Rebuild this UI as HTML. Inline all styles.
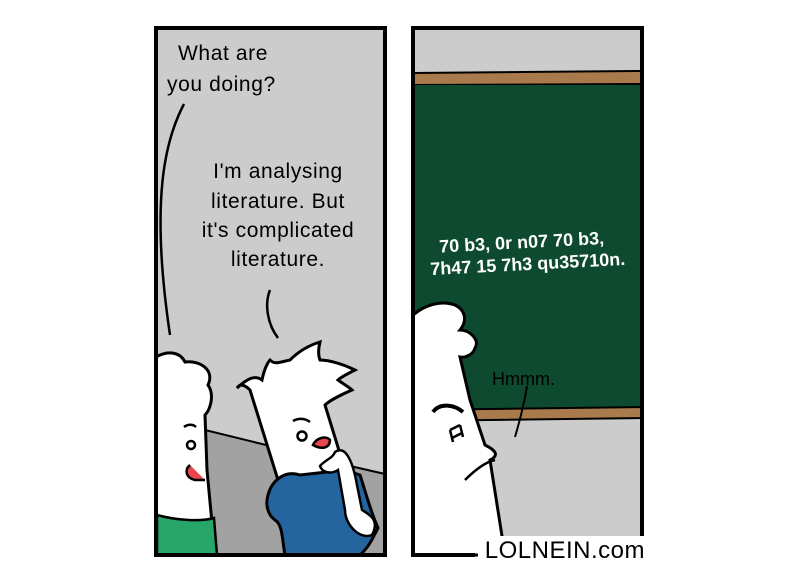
<!DOCTYPE html>
<html><head><meta charset="utf-8"><style>
html,body{margin:0;padding:0;background:#fff;width:798px;height:584px;overflow:hidden}
svg{display:block}
text{font-family:"Liberation Sans",sans-serif}
</style></head><body>
<svg width="798" height="584" viewBox="0 0 798 584" xmlns="http://www.w3.org/2000/svg">
<!-- Panel 1 -->
<rect x="156" y="28" width="229" height="527" fill="#cccccc"/>
<polygon points="205,430 262,444 350,466 385,474 385,555 205,555" fill="#a2a2a2" stroke="#000" stroke-width="2"/>
<g fill="#000" font-size="21" letter-spacing="0.6">
<text x="178" y="60">What are</text>
<text x="167" y="91">you doing?</text>
<text x="278" y="178" text-anchor="middle">I'm analysing</text>
<text x="278" y="208" text-anchor="middle">literature. But</text>
<text x="278" y="237" text-anchor="middle">it's complicated</text>
<text x="278" y="266" text-anchor="middle">literature.</text>
</g>
<path d="M184,104 C165,140 150,200 170,335" fill="none" stroke="#000" stroke-width="2.5"/>
<path d="M270,290 C264,305 268,325 278,338" fill="none" stroke="#000" stroke-width="2.5"/>
<!-- left character -->
<path d="M156,357 C168,350 180,352 185,362 C200,360 215,370 208,385 C215,395 210,410 205,415 L207,470 L215,555 L156,555 Z" fill="#fff" stroke="#000" stroke-width="3"/>
<path d="M157,515 C175,520 200,522 214,518 L217,555 L157,555 Z" fill="#27a66a" stroke="#000" stroke-width="2.5"/>
<circle cx="191" cy="445" r="4" fill="none" stroke="#000" stroke-width="2.5"/>
<path d="M184,427 C188,424 193,424 196,427" fill="none" stroke="#000" stroke-width="2.5"/>
<path d="M190,465 C184,470 186,478 195,480 L205,480" fill="#e9454d" stroke="#000" stroke-width="2.5"/>
<!-- right character -->
<path d="M278,480 L250,390 C245,385 240,383 237,388 C248,378 255,375 262,380 C265,365 270,360 270,360 C275,365 280,362 290,360 C300,350 310,345 320,342 C318,350 318,355 320,360 C330,360 345,365 355,370 C345,375 340,378 338,380 C345,385 350,388 352,390 C345,393 330,400 325,405 L345,470 Z" fill="#fff" stroke="#000" stroke-width="3"/>
<path d="M268,495 C272,480 285,470 300,475 L345,470 L360,475 C365,490 370,510 378,528 C372,540 368,548 360,555 L285,555 C282,540 283,525 275,520 C268,515 265,505 268,495 Z" fill="#2465a0" stroke="#000" stroke-width="3"/>
<path d="M335,452 C345,445 352,460 356,480 L362,510 C370,515 380,520 372,535 C360,540 345,525 345,510 L338,470 C330,475 322,472 320,466 C325,460 333,458 335,452 Z" fill="#fff" stroke="#000" stroke-width="2.5"/>
<circle cx="302" cy="436" r="4.5" fill="none" stroke="#000" stroke-width="2.5"/>
<path d="M293,421 C298,418 305,418 310,422" fill="none" stroke="#000" stroke-width="2.5"/>
<path d="M313,445 C316,438 326,435 330,440 C330,448 322,450 313,445 Z" fill="#e9454d" stroke="#000" stroke-width="2.5"/>
<rect x="156" y="28" width="229" height="527" fill="none" stroke="#000" stroke-width="4"/>
<!-- Panel 2 -->
<rect x="413" y="28" width="229" height="527" fill="#cccccc"/>
<path d="M413,73 L642,71 L642,84 L413,85 Z" fill="#a87a4c" stroke="#000" stroke-width="2"/>
<rect x="413" y="85" width="229" height="324" fill="#0e4a30"/>
<path d="M413,410 L642,407 L642,418 L413,421 Z" fill="#a87a4c" stroke="#000" stroke-width="2"/>
<g fill="#fff" font-size="18" font-weight="bold" transform="rotate(-3 527 250)">
<text x="522" y="248" text-anchor="middle">70 b3, 0r n07 70 b3,</text>
<text x="527" y="270" text-anchor="middle">7h47 15 7h3 qu35710n.</text>
</g>
<text x="492" y="385" font-size="18" fill="#000">Hmmm.</text>
<path d="M527,386 C524,405 520,420 515,437" fill="none" stroke="#000" stroke-width="2"/>
<path d="M413,315 C425,305 440,300 455,305 C465,310 468,320 460,330 C470,330 480,340 475,348 C473,355 465,358 460,357 L470,400 L485,445 C495,450 500,455 490,460 L505,555 L413,555 Z" fill="#fff" stroke="#000" stroke-width="3"/>
<path d="M433,412 C440,402 455,405 463,412" fill="none" stroke="#000" stroke-width="4"/>
<path d="M450,430 L453,442 M460,425 L463,437 M450,430 L460,425 M452,438 L462,433" stroke="#000" stroke-width="2.5"/>
<path d="M465,480 C475,470 485,462 495,460" fill="none" stroke="#000" stroke-width="2.5"/>
<path d="M475,555 L413,555 L413,28 L642,28 L642,536" fill="none" stroke="#000" stroke-width="4"/>
<rect x="478" y="536" width="170" height="30" fill="#fff"/>
<text x="645" y="558" font-size="24" fill="#000" text-anchor="end" letter-spacing="0.5">LOLNEIN.com</text>
</svg>
</body></html>
